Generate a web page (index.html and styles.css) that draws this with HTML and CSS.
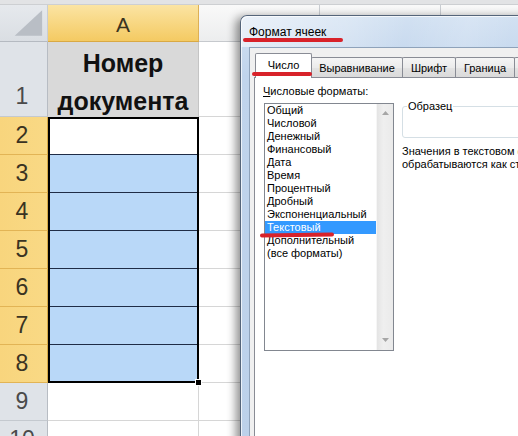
FILE: index.html
```html
<!DOCTYPE html>
<html lang="ru">
<head>
<meta charset="utf-8">
<title>Формат ячеек</title>
<link rel="stylesheet" href="styles.css">
</head>
<body>
<div class="screen">
  <div class="sheet">
    <div class="col col-rh">
      <div class="strip"></div>
      <div class="hdr corner">
        <svg class="tri" width="48" height="37" viewBox="0 0 48 37"><polygon points="43,5 43,31 15,31" fill="#B9BEC5"/></svg>
      </div>
      <div class="rh rh-1">1</div>
      <div class="rh rh-sel">2</div>
      <div class="rh rh-sel">3</div>
      <div class="rh rh-sel">4</div>
      <div class="rh rh-sel">5</div>
      <div class="rh rh-sel">6</div>
      <div class="rh rh-sel">7</div>
      <div class="rh rh-sel rh-last">8</div>
      <div class="rh">9</div>
      <div class="rh">10</div>
    </div>
    <div class="col col-a">
      <div class="strip"></div>
      <div class="hdr hdr-sel">A</div>
      <div class="a1">Номер<br>документа</div>
      <div class="selbox">
        <div class="tc tc-active"></div>
        <div class="tc"></div>
        <div class="tc"></div>
        <div class="tc"></div>
        <div class="tc"></div>
        <div class="tc"></div>
        <div class="tc tc-last"></div>
        <span class="handle"></span>
      </div>
      <div class="cell"></div>
      <div class="cell"></div>
    </div>
    <div class="col col-x">
      <div class="strip"></div>
      <div class="hdr hdr-x">B</div>
      <div class="cell cell-1"></div>
      <div class="cell"></div><div class="cell"></div><div class="cell"></div><div class="cell"></div>
      <div class="cell"></div><div class="cell"></div><div class="cell"></div><div class="cell"></div><div class="cell"></div>
    </div>
    <div class="col col-x">
      <div class="strip"></div>
      <div class="hdr hdr-x">C</div>
      <div class="cell cell-1"></div>
      <div class="cell"></div><div class="cell"></div><div class="cell"></div><div class="cell"></div>
      <div class="cell"></div><div class="cell"></div><div class="cell"></div><div class="cell"></div><div class="cell"></div>
    </div>
    <div class="col col-x">
      <div class="strip"></div>
      <div class="hdr hdr-x">D</div>
      <div class="cell cell-1"></div>
      <div class="cell"></div><div class="cell"></div><div class="cell"></div><div class="cell"></div>
      <div class="cell"></div><div class="cell"></div><div class="cell"></div><div class="cell"></div><div class="cell"></div>
    </div>
  </div>

  <div class="dialog">
    <div class="titlebar">Формат ячеек</div>
    <div class="client">
      <div class="tabs">
        <div class="tab active w1">Число</div>
        <div class="tab w2">Выравнивание</div>
        <div class="tab w3">Шрифт</div>
        <div class="tab w4">Граница</div>
        <div class="tab w5">Заливка</div>
      </div>
      <div class="page">
        <div class="leftcol">
          <div class="label"><u>Ч</u>исловые форматы:</div>
          <div class="listbox">
            <div class="items">
              <div class="item">Общий</div>
              <div class="item">Числовой</div>
              <div class="item">Денежный</div>
              <div class="item">Финансовый</div>
              <div class="item">Дата</div>
              <div class="item">Время</div>
              <div class="item">Процентный</div>
              <div class="item">Дробный</div>
              <div class="item">Экспоненциальный</div>
              <div class="item selected">Текстовый</div>
              <div class="item">Дополнительный</div>
              <div class="item">(все форматы)</div>
            </div>
            <div class="scroll">
              <svg width="7" height="4" viewBox="0 0 7 4"><polygon points="0,4 3.5,0 7,4" fill="#A6A6A6"/></svg>
              <svg width="7" height="4" viewBox="0 0 7 4"><polygon points="0,0 3.5,4 7,0" fill="#A6A6A6"/></svg>
            </div>
          </div>
        </div>
        <div class="rightcol">
          <fieldset class="sample"><legend>Образец</legend></fieldset>
          <div class="note">Значения в текстовом формате<br>обрабатываются как строки, даже если являются числами.</div>
        </div>
      </div>
    </div>
  </div>

  <span class="mark mark-title"></span>
  <span class="mark mark-tab"></span>
  <span class="mark mark-item"></span>
</div>
</body>
</html>
```
FILE: styles.css
```css
* { box-sizing: border-box; margin: 0; padding: 0; }
html, body { width: 518px; height: 436px; overflow: hidden; background: #fff; }
body { font-family: "Liberation Sans", Arial, sans-serif; color: #000; }

.screen { position: relative; width: 518px; height: 436px; overflow: hidden; }

/* spreadsheet */
.sheet { display: flex; }
.col { display: flex; flex-direction: column; flex: none; }
.col-rh { width: 48px; }
.col-a { width: 151px; }
.col-x { width: 121px; }

.strip { height: 5px; background: #E2E3E5; border-bottom: 1px solid #CDCFD2; }

.hdr {
  height: 37px; display: flex; align-items: center; justify-content: center;
  padding-top: 3px; font-size: 21px; color: #333;
  border-right: 1px solid #C9CDD2; border-bottom: 1px solid #B5BAC1;
}
.corner { background: linear-gradient(#E6E9ED, #DADEE3); position: relative; padding: 0; }
.tri { display: block; }
.hdr-sel { background: linear-gradient(#FBE4A3, #F4CA62); border-right-color: #DDB055; border-bottom-color: #D9A944; color: #3b3420; }
.hdr-x { background: linear-gradient(#F9F9F9, #ECEDEE); border-bottom-color: #C6C9CD; }

.rh {
  height: 38px; flex: none; display: flex; align-items: center; justify-content: center;
  padding-right: 3px; font-size: 23px; color: #4a4a4a;
  background: #DFE3E8; border-bottom: 1px solid #C4C9CF; border-right: 1px solid #B7BCC3;
}
.rh-1 { height: 75px; align-items: flex-end; padding-bottom: 6px; }
.rh-sel { background: linear-gradient(to right, #F8D57D, #F9D985); border-bottom-color: #E2B455; border-right-color: #D6A844; color: #3a3322; }

.cell { height: 38px; flex: none; border-bottom: 1px solid #D6D6D6; border-right: 1px solid #D6D6D6; }
.cell-1 { height: 75px; }

.a1 {
  height: 75px; flex: none; background: #D9D9D9; font-weight: bold; font-size: 25px;
  line-height: 38px; padding-top: 2px; text-align: center; color: #111;
  border-right: 1px solid #C4C4C4;
}

.selbox { position: relative; height: 266px; flex: none; border: 2px solid #000; background: #fff; }
.tc { height: 38px; background: #B9D8F8; border-bottom: 1px solid #1F2C46; }
.tc-active { height: 36px; background: #fff; }
.tc-last { height: 36px; border-bottom: none; }
.handle { position: absolute; right: -5px; bottom: -5px; width: 7px; height: 7px; background: #000; border: 1px solid #fff; }

/* dialog */
.dialog {
  position: absolute; left: 240px; top: 15px; width: 300px; height: 440px;
  border: 1px solid #55657A; border-right: none; border-radius: 7px 0 0 0;
  background: linear-gradient(to bottom, #D2E1F2, #C0D4EC 60px, #BCD1EA);
  box-shadow: -4px 2px 10px rgba(0,0,0,.45), inset 1px 1px 0 rgba(255,255,255,.7);
  padding-left: 8px; display: flex; flex-direction: column;
}
.titlebar {
  height: 31px; flex: none; display: flex; align-items: center;
  margin-left: -8px; padding-left: 8px; border-radius: 6px 0 0 0;
  font-size: 12px; color: #000;
  background: linear-gradient(100deg, rgba(255,255,255,.55) 0, rgba(255,255,255,.25) 35%, rgba(255,255,255,0) 55%, rgba(255,255,255,.15) 75%, rgba(255,255,255,0) 90%);
}
.client {
  flex: 1; background: #F0F0F0; border-top: 1px solid #8EA2BA; border-left: 1px solid #8EA2BA;
  padding: 5px 0 0 5px; display: flex; flex-direction: column;
}
.tabs { display: flex; align-items: flex-end; height: 24px; flex: none; position: relative; z-index: 1; }
.tab {
  height: 20px; flex: none; margin-left: -1px; border: 1px solid #898C95; border-bottom: none;
  border-radius: 2px 2px 0 0; display: flex; align-items: center; justify-content: center;
  font-size: 11px; background: linear-gradient(#F5F5F5, #EBEBEB 50%, #E3E3E3 51%, #DADADA);
}
.tab.active { height: 25px; margin-left: 0; margin-bottom: -1px; background: #fff; position: relative; z-index: 2; padding-bottom: 2px; }
.w1 { width: 57px; }
.w2 { width: 92px; }
.w3 { width: 54px; }
.w4 { width: 60px; }
.w5 { width: 60px; }

.page { flex: 1; margin-left: -1px; border: 1px solid #898C95; background: #fff; display: flex; gap: 8px; padding: 7px 0 0 8px; }
.leftcol { width: 131px; flex: none; }
.label { font-size: 11px; line-height: 13px; height: 13px; white-space: nowrap; }
.listbox { margin: 5px 0 0 1px; width: 130px; height: 248px; border: 1px solid #828790; display: flex; }
.items { flex: 1; font-size: 11px; line-height: 13px; padding-top: 0; }
.item { padding-left: 2px; white-space: nowrap; }
.item.selected { background: #3399FF; color: #fff; }
.scroll {
  width: 17px; flex: none; background: linear-gradient(to right, #E4E4E4, #EFEFEF 40%, #EAEAEA);
  border-left: 1px solid #F6F6F6; display: flex; flex-direction: column;
  justify-content: space-between; align-items: center; padding: 7px 0 8px;
}
.scroll svg { display: block; }

.rightcol { flex: 1; min-width: 0; }
.sample { margin-top: 15px; height: 38px; border: 1px solid #D5DFE5; border-radius: 3px; padding: 0; }
.sample legend { font-size: 11px; line-height: 13px; margin-left: 4px; padding: 0 1px; }
.note { margin-top: 7px; font-size: 11px; line-height: 13px; white-space: nowrap; }

/* red marker strokes */
.mark { position: absolute; height: 4px; background: #D8222A; border-radius: 2px; z-index: 10; }
.mark-title { left: 243px; top: 38px; width: 100px; }
.mark-tab { left: 252px; top: 72px; width: 60px; }
.mark-item { left: 260px; top: 233px; width: 74px; transform: rotate(-0.8deg); }
```
